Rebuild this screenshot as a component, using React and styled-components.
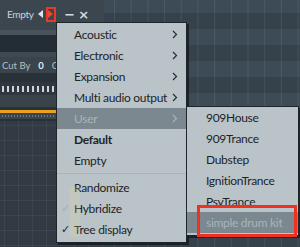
import styled, { createGlobalStyle } from 'styled-components'

const GlobalStyle = createGlobalStyle`
  html, body {
    margin: 0;
    padding: 0;
  }
  body {
    width: 300px;
    height: 247px;
    overflow: hidden;
    background: #333d45;
    font-family: Lato, "Noto Sans", sans-serif;
  }
`

const Screen = styled.div`
  position: relative;
  width: 300px;
  height: 247px;
  overflow: hidden;
  display: flex;
`

// channel window on the left, mostly hidden by the menu
const ChannelWindow = styled.div`
  width: 104px;
  display: flex;
  flex-direction: column;
  background: #323b43;
`

const TitleBar = styled.div`
  height: 28px;
  flex-shrink: 0;
  display: flex;
  align-items: center;
  padding: 0 0 2px 7px;
  background: #3b464e;
  color: #cdd4d8;
  font-size: 10px;
  letter-spacing: -0.3px;
`

const TitleText = styled.span`
  margin-right: 4px;
`

const ArrowBox = styled.div`
  width: ${(p) => (p.$marked ? 6 : 6)}px;
  height: 11px;
  display: flex;
  align-items: center;
  justify-content: center;
  border: ${(p) => (p.$marked ? '2px solid #e8392b' : 'none')};
  margin-right: ${(p) => p.$gap || 0}px;
`

const WinButton = styled.span`
  width: 14px;
  text-align: center;
  color: #d4dadd;
  font-size: 13px;
  font-weight: bold;
  font-family: "DejaVu Sans", sans-serif;
`

const Band = styled.div`
  height: ${(p) => p.$h}px;
  flex-shrink: 0;
  background: ${(p) => p.$bg};
`

const InfoRow = styled.div`
  height: 16px;
  flex-shrink: 0;
  display: flex;
  align-items: center;
  gap: 8px;
  padding-left: 2px;
  background: #3a444c;
  color: #b7c0c5;
  font-size: 9.5px;
  white-space: nowrap;
`

const Zero = styled.b`
  color: #e6eaec;
`

const StepRow = styled.div`
  height: 13px;
  flex-shrink: 0;
  background-color: #2f383f;
  background-image: repeating-linear-gradient(to right, transparent 0 2px, #cfd5d9 2px 4px, transparent 4px 5px);
  background-size: 100% 6px;
  background-position: 0 4px;
  background-repeat: no-repeat;
`

const OrangeLine = styled.div`
  height: 3px;
  flex-shrink: 0;
  background: #e8a21f;
`

const TickRow = styled.div`
  height: 6px;
  flex-shrink: 0;
  background-color: #3a444c;
  background-image: repeating-linear-gradient(to right, transparent 0 2px, #6e7a82 2px 3px);
  background-size: 100% 2px;
  background-position: 0 2px;
  background-repeat: no-repeat;
`

const LowerGrid = styled.div`
  flex: 1;
  background-color: #323b43;
  background-image:
    linear-gradient(to right, rgba(255, 255, 255, 0.05) 1px, transparent 1px),
    linear-gradient(to bottom, rgba(255, 255, 255, 0.05) 1px, transparent 1px);
  background-size: 14px 15px;
  background-position: 4px 4px;
`

const Playlist = styled.div`
  flex: 1;
  background-color: #3c4b56;
  background-image:
    linear-gradient(to right, rgba(255, 255, 255, 0.08) 1px, transparent 1px),
    linear-gradient(to bottom, rgba(0, 0, 0, 0.12) 16px, transparent 16px);
  background-size: 16.7px 100%, 100% 32px;
  background-position: 10px 0, 0 13px;
`

const Menu = styled.div`
  position: absolute;
  left: ${(p) => p.$x}px;
  top: ${(p) => p.$y}px;
  width: ${(p) => p.$w}px;
  padding: ${(p) => p.$pad}px 0 2px;
  display: flex;
  flex-direction: column;
  background: #b9c3c8;
  border: 1px solid #1e262c;
  box-shadow: 2px 2px 0 rgba(15, 20, 24, 0.7);
  color: #1d2429;
  font-size: 12px;
  letter-spacing: -0.3px;
`

const Item = styled.div`
  height: 21px;
  display: grid;
  grid-template-columns: ${(p) => p.$indent}px 1fr 14px;
  align-items: center;
  background: ${(p) => (p.$active ? '#7b8890' : 'transparent')};
  color: ${(p) => (p.$dim ? '#a9b4ba' : 'inherit')};
  font-weight: ${(p) => (p.$bold ? 700 : 400)};
  white-space: nowrap;
`

const Separator = styled.div`
  height: 1px;
  margin: 2px 0 3px;
  background: #a9b4b9;
`

const Check = styled.span`
  justify-self: center;
  font-size: 11px;
  font-family: "DejaVu Sans", sans-serif;
  color: ${(p) => (p.$faint ? '#a3aeb4' : '#1d2429')};
`

const Highlight = styled.div`
  position: absolute;
  left: 197px;
  top: 205px;
  width: 94px;
  height: 26px;
  border: 3px solid #f2301f;
`

const Ghost = styled.div`
  position: absolute;
  left: 70px;
  top: 187px;
  width: 10px;
  height: 50px;
  background: rgba(235, 215, 140, 0.22);
`

const Chevron = ({ light }) => (
  <svg width="6" height="9" viewBox="0 0 6 9">
    <path d="M1 1 L4.5 4.5 L1 8" fill="none" stroke={light ? '#a9b4ba' : '#252d33'} strokeWidth="1.2" />
  </svg>
)

const Tri = ({ dir, color }) => (
  <svg width="5" height="8" viewBox="0 0 5 8">
    <path d={dir === 'left' ? 'M5 0 L0 4 L5 8 Z' : 'M0 0 L5 4 L0 8 Z'} fill={color} />
  </svg>
)

const mainItems = [
  { label: 'Acoustic', sub: true },
  { label: 'Electronic', sub: true },
  { label: 'Expansion', sub: true },
  { label: 'Multi audio output', sub: true },
  { label: 'User', sub: true, active: true },
  { label: 'Default', bold: true },
  { label: 'Empty' },
  { sep: true },
  { label: 'Randomize' },
  { label: 'Hybridize', check: 'faint' },
  { label: 'Tree display', check: 'on' },
]

const userItems = ['909House', '909Trance', 'Dubstep', 'IgnitionTrance', 'PsyTrance', 'simple drum kit']

export default function App() {
  return (
    <>
      <GlobalStyle />
      <Screen>
        <ChannelWindow>
          <TitleBar>
            <TitleText>Empty</TitleText>
            <ArrowBox $gap={2}><Tri dir="left" color="#dfe4e7" /></ArrowBox>
            <ArrowBox $marked $gap={7}><Tri dir="right" color="#f0452f" /></ArrowBox>
            <WinButton>−</WinButton>
            <WinButton>×</WinButton>
          </TitleBar>
          <Band $h={5} $bg="#48535b" />
          <Band $h={17} $bg="#252d34" />
          <Band $h={5} $bg="#3f4951" />
          <InfoRow>
            <span>Cut By</span>
            <Zero>0</Zero>
            <span>Output</span>
          </InfoRow>
          <Band $h={9} $bg="#2a3239" />
          <StepRow />
          <Band $h={12} $bg="#394349" />
          <Band $h={3} $bg="#2a3239" />
          <OrangeLine />
          <TickRow />
          <Band $h={2} $bg="#283037" />
          <LowerGrid />
        </ChannelWindow>
        <Playlist />

        <Menu $x={56} $y={22} $w={129} $pad={1}>
          {mainItems.map((it, i) =>
            it.sep ? (
              <Separator key={i} />
            ) : (
              <Item key={i} $indent={17} $active={it.active} $dim={it.active} $bold={it.bold}>
                {it.check ? <Check $faint={it.check === 'faint'}>✓</Check> : <span />}
                <span>{it.label}</span>
                {it.sub ? <Chevron light={it.active} /> : <span />}
              </Item>
            )
          )}
        </Menu>
        <Ghost />

        <Menu $x={186} $y={106} $w={111} $pad={0}>
          {userItems.map((name, i) => (
            <Item key={name} $indent={19} $active={i === userItems.length - 1} $dim={i === userItems.length - 1}>
              <span />
              <span>{name}</span>
              <span />
            </Item>
          ))}
        </Menu>
        <Highlight />
      </Screen>
    </>
  )
}
